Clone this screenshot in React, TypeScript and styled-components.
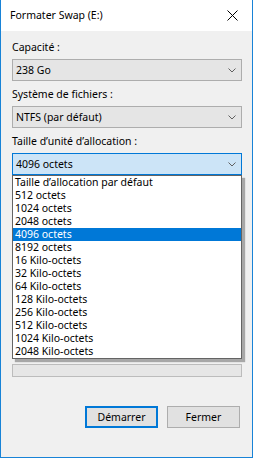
import React from "react";
import styled, { createGlobalStyle } from "styled-components";

const GlobalStyle = createGlobalStyle`
  html, body {
    margin: 0;
    padding: 0;
    background: #ffffff;
  }
  body {
    font-family: "Noto Sans", "Open Sans", sans-serif;
    font-size: 10.5px;
    color: #000000;
  }
`;

// The whole dialog window, with its thin blue frame
const Window = styled.div`
  width: 253px;
  height: 458px;
  box-sizing: border-box;
  border: 1px solid #1883d7;
  border-top: none;
  display: flex;
  flex-direction: column;
  background: #f0f0f0;
`;

const TitleBar = styled.div`
  height: 31px;
  background: #ffffff;
  display: flex;
  align-items: center;
  justify-content: space-between;
  padding-left: 9px;
`;

const Title = styled.span`
  font-size: 10.5px;
  line-height: 15px;
  margin-top: -1px;
`;

const CloseButton = styled.div`
  width: 34px;
  height: 31px;
  display: flex;
  align-items: center;
  justify-content: center;
  margin-right: 3px;
`;

const Body = styled.div`
  flex: 1;
  padding: 9px 10px 0 11px;
  display: flex;
  flex-direction: column;
`;

// A label with its combo box below
const Field = styled.div`
  display: flex;
  flex-direction: column;
  margin-bottom: 6px;
`;

const Label = styled.div`
  height: 15px;
  line-height: 15px;
  margin-bottom: 4px;
`;

const ComboWrap = styled.div`
  position: relative;
`;

const Combo = styled.div<{ $open?: boolean }>`
  height: 22px;
  box-sizing: border-box;
  border: 1px solid ${(p) => (p.$open ? "#0078d7" : "#adadad")};
  background: ${(p) => (p.$open ? "#cce4f7" : "#e5e5e5")};
  display: flex;
  align-items: center;
  justify-content: space-between;
  padding: 0 5px 0 3px;
`;

const ComboText = styled.span`
  line-height: 15px;
`;

// The open list of the allocation combo, lying over the dialog
const DropList = styled.div`
  position: absolute;
  top: 100%;
  left: 0;
  right: 0;
  background: #ffffff;
  border: 1px solid #646464;
  box-shadow: 3px 3px 1px rgba(0, 0, 0, 0.3);
  z-index: 2;
`;

const DropItem = styled.div<{ $selected?: boolean }>`
  height: 13px;
  line-height: 13px;
  padding-left: 2px;
  white-space: nowrap;
  background: ${(p) => (p.$selected ? "#0078d7" : "transparent")};
  color: ${(p) => (p.$selected ? "#ffffff" : "#000000")};
`;

// The volume options under the open list (hidden by it)
const CoveredArea = styled.div`
  height: 183px;
`;

const Progress = styled.div`
  height: 13px;
  box-sizing: border-box;
  border: 1px solid #bcbcbc;
  background: #e6e6e6;
`;

const ButtonRow = styled.div`
  display: flex;
  justify-content: flex-end;
  gap: 9px;
  margin-top: 29px;
  padding-right: 2px;
`;

const Button = styled.div<{ $default?: boolean }>`
  width: 73px;
  height: 22px;
  box-sizing: border-box;
  border: ${(p) => (p.$default ? "2px solid #0078d7" : "1px solid #adadad")};
  background: #e1e1e1;
  display: flex;
  align-items: center;
  justify-content: center;
  line-height: 15px;
`;

const Chevron = () => (
  <svg width="8" height="5" viewBox="0 0 8 5">
    <path d="M0.5 0.5 L4 4 L7.5 0.5" fill="none" stroke="#606060" strokeWidth="1" />
  </svg>
);

const CloseIcon = () => (
  <svg width="11" height="11" viewBox="0 0 11 11">
    <path d="M0.5 0.5 L10.5 10.5 M10.5 0.5 L0.5 10.5" stroke="#000000" strokeWidth="1" />
  </svg>
);

const allocationSizes = [
  "Taille d’allocation par défaut",
  "512 octets",
  "1024 octets",
  "2048 octets",
  "4096 octets",
  "8192 octets",
  "16 Kilo-octets",
  "32 Kilo-octets",
  "64 Kilo-octets",
  "128 Kilo-octets",
  "256 Kilo-octets",
  "512 Kilo-octets",
  "1024 Kilo-octets",
  "2048 Kilo-octets",
];

const App: React.FC = () => {
  const selected = "4096 octets";
  return (
    <>
      <GlobalStyle />
      <Window>
        <TitleBar>
          <Title>Formater Swap (E:)</Title>
          <CloseButton>
            <CloseIcon />
          </CloseButton>
        </TitleBar>
        <Body>
          <Field>
            <Label>Capacité :</Label>
            <Combo>
              <ComboText>238 Go</ComboText>
              <Chevron />
            </Combo>
          </Field>
          <Field>
            <Label>Système de fichiers :</Label>
            <Combo>
              <ComboText>NTFS (par défaut)</ComboText>
              <Chevron />
            </Combo>
          </Field>
          <Field>
            <Label>Taille d’unité d’allocation :</Label>
            <ComboWrap>
              <Combo $open>
                <ComboText>{selected}</ComboText>
                <Chevron />
              </Combo>
              <DropList>
                {allocationSizes.map((s) => (
                  <DropItem key={s} $selected={s === selected}>
                    {s}
                  </DropItem>
                ))}
              </DropList>
            </ComboWrap>
          </Field>
          <CoveredArea />
          <Progress />
          <ButtonRow>
            <Button $default>Démarrer</Button>
            <Button>Fermer</Button>
          </ButtonRow>
        </Body>
      </Window>
    </>
  );
};

export default App;
